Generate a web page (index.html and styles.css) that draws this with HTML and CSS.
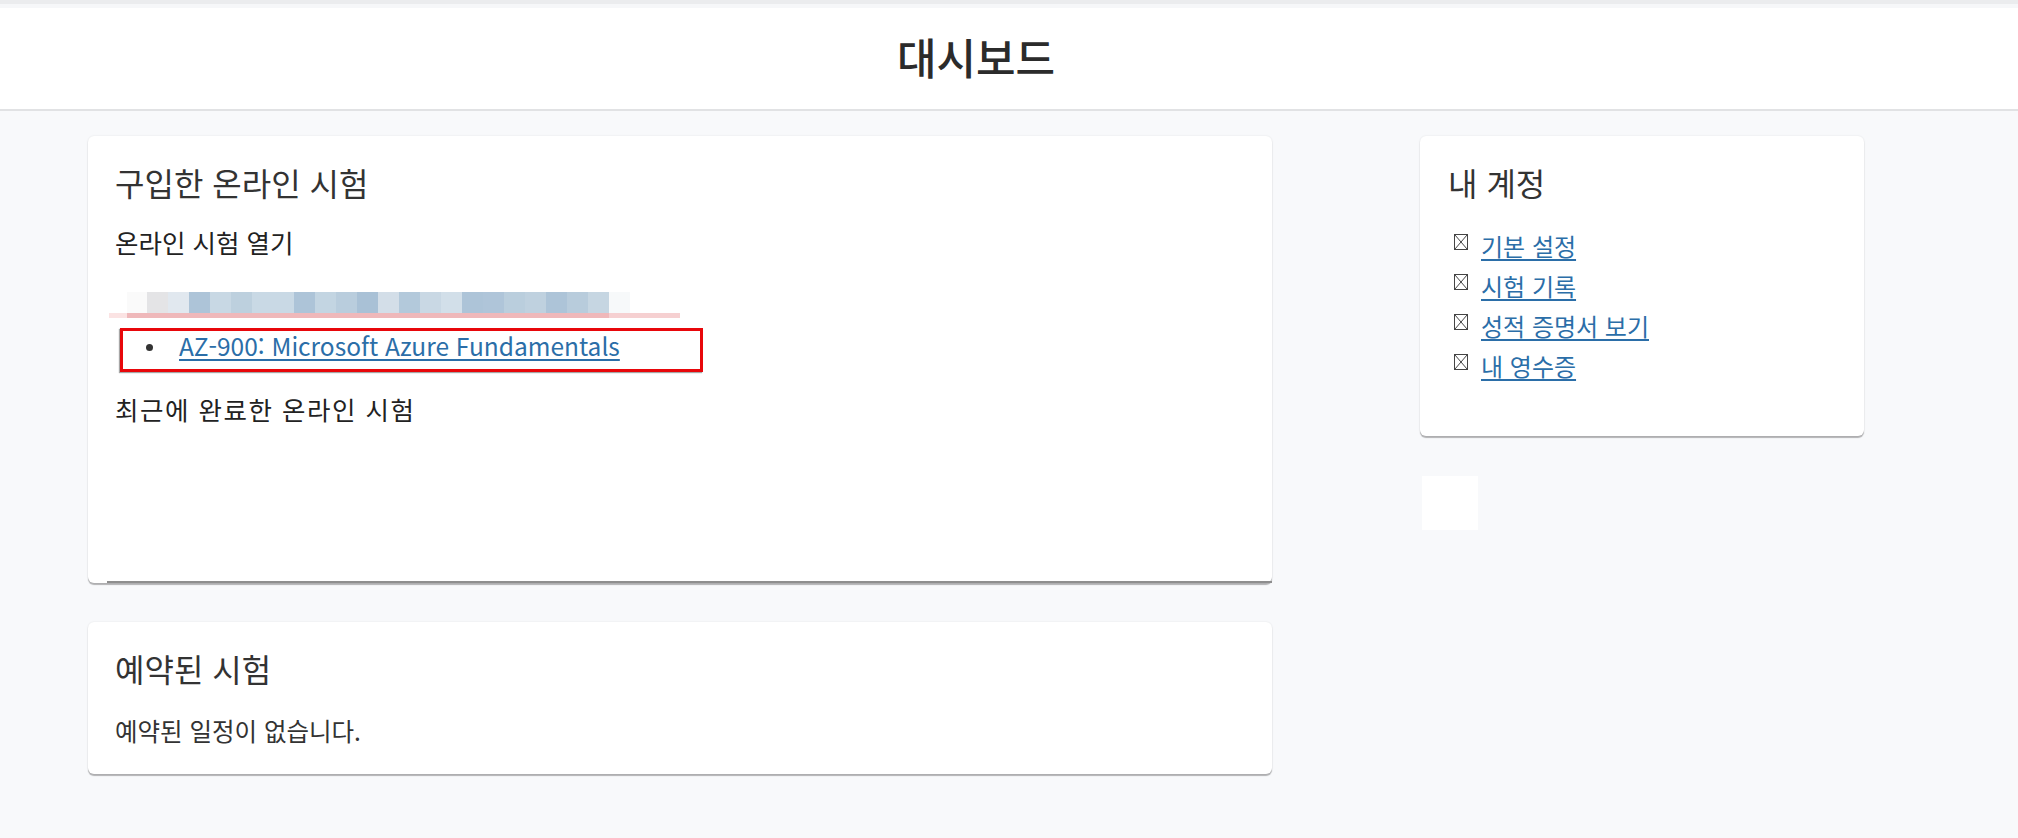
FILE: index.html
```html
<!DOCTYPE html>
<html lang="ko">
<head>
<meta charset="utf-8">
<title>대시보드</title>
<link rel="stylesheet" href="styles.css">
</head>
<body>
<div class="topbar"></div>
<header class="header">
  <div class="header-inner">
    <h1 class="page-title">대시보드</h1>
  </div>
</header>
<main class="main">
  <div class="col-left">
    <section class="card card-exams">
      <h2 class="card-title">구입한 온라인 시험</h2>
      <h3 class="sub-title">온라인 시험 열기</h3>
      <div class="blur-wrap">
        <div class="blur-text"></div>
        <div class="blur-line"></div>
      </div>
      <div class="highlight">
        <ul class="exam-list">
          <li><a href="#">AZ-900: Microsoft Azure Fundamentals</a></li>
        </ul>
      </div>
      <h3 class="sub-title recent-title">최근에 완료한 온라인 시험</h3>
      <div class="recent-area"></div>
    </section>
    <section class="card card-scheduled">
      <h2 class="card-title">예약된 시험</h2>
      <p class="card-text">예약된 일정이 없습니다.</p>
    </section>
  </div>
  <div class="col-right">
    <section class="card card-account">
      <h2 class="card-title">내 계정</h2>
      <ul class="account-list">
        <li><svg class="xbox" viewBox="0 0 14 16" width="14" height="16"><rect x="0.5" y="0.5" width="13" height="15" fill="none" stroke="#444" stroke-width="1"/><path d="M1 1 L13 15 M13 1 L1 15" stroke="#444" stroke-width="1" fill="none"/></svg><a href="#">기본 설정</a></li>
        <li><svg class="xbox" viewBox="0 0 14 16" width="14" height="16"><rect x="0.5" y="0.5" width="13" height="15" fill="none" stroke="#444" stroke-width="1"/><path d="M1 1 L13 15 M13 1 L1 15" stroke="#444" stroke-width="1" fill="none"/></svg><a href="#">시험 기록</a></li>
        <li><svg class="xbox" viewBox="0 0 14 16" width="14" height="16"><rect x="0.5" y="0.5" width="13" height="15" fill="none" stroke="#444" stroke-width="1"/><path d="M1 1 L13 15 M13 1 L1 15" stroke="#444" stroke-width="1" fill="none"/></svg><a href="#">성적 증명서 보기</a></li>
        <li><svg class="xbox" viewBox="0 0 14 16" width="14" height="16"><rect x="0.5" y="0.5" width="13" height="15" fill="none" stroke="#444" stroke-width="1"/><path d="M1 1 L13 15 M13 1 L1 15" stroke="#444" stroke-width="1" fill="none"/></svg><a href="#">내 영수증</a></li>
      </ul>
    </section>
    <div class="blank-box"></div>
  </div>
</main>
</body>
</html>
```
FILE: styles.css
```css
* { box-sizing: border-box; }
html, body { margin: 0; padding: 0; }
body {
  background: #f8f9fb;
  color: #333;
  font-family: "Noto Sans CJK KR", "Noto Sans", sans-serif;
  width: 2018px;
  height: 838px;
  overflow: hidden;
}
.topbar {
  height: 8px;
  background: linear-gradient(#ebecee 0, #ebecee 4px, #f6f7f9 4px, #f6f7f9 8px);
}
.header {
  background: #fff;
  height: 103px;
  border-bottom: 2px solid #e1e2e4;
}
.header-inner {
  margin-left: 88px;
  width: 1776px;
  height: 100%;
  display: flex;
  align-items: center;
  justify-content: center;
  padding-bottom: 6px;
}
.page-title {
  margin: 0;
  font-size: 43px;
  font-weight: 500;
  line-height: 50px;
  color: #2b2b2b;
}
.main {
  display: flex;
  gap: 148px;
  padding: 25px 0 0 88px;
}
.col-left {
  width: 1184px;
  display: flex;
  flex-direction: column;
  gap: 39px;
}
.col-right {
  width: 444px;
  display: flex;
  flex-direction: column;
}
.card {
  background: #fff;
  border-radius: 6px;
  box-shadow: 0 0 2px rgba(0,0,0,0.10), 0 2px 1px rgba(0,0,0,0.28);
  padding: 26px 27px 0;
}
.card-title {
  margin: 0;
  font-size: 32px;
  font-weight: 400;
  line-height: 40px;
  color: #333;
}
.sub-title {
  margin: 24px 0 0;
  font-size: 25.5px;
  font-weight: 400;
  line-height: 32px;
  color: #222;
}
.blur-wrap {
  margin-top: 34px;
}
.blur-text {
  margin-left: 12px;
  width: 503px;
  height: 21px;
  background: linear-gradient(90deg,
    #fafafa 0 20px, #e4e4e6 20px 41px, #e1e8ef 41px 62px, #adc4d8 62px 83px,
    #c8d8e4 83px 104px, #bdd0de 104px 125px, #c9d9e5 125px 167px, #adc4d8 167px 188px,
    #c3d5e2 188px 209px, #b9cddd 209px 230px, #a9c1d6 230px 251px, #d3dee8 251px 272px,
    #b3c9db 272px 293px, #c9d8e4 293px 314px, #d2dfe9 314px 335px, #adc4d8 335px 356px,
    #afc5d9 356px 377px, #bacedd 377px 398px, #bfd1df 398px 419px, #adc4d8 419px 440px,
    #b8ccdc 440px 461px, #c6d6e2 461px 482px, #f7f9fa 482px 503px);
}
.blur-line {
  margin-left: -6px;
  width: 571px;
  height: 5px;
  background: linear-gradient(90deg, #fbe3e3 0 18px, #efb8ba 18px 500px, #f6d0d1 500px 571px);
}
.highlight {
  margin: 10px 0 0 5px;
  width: 583px;
  height: 44px;
  border: 3px solid #e8070b;
  box-shadow: -1px 1px 1px rgba(0,0,0,0.35);
  display: flex;
  align-items: center;
  padding-bottom: 8px;
}
.exam-list {
  list-style: none;
  margin: 0;
  padding: 0 0 0 23px;
  font-size: 24.5px;
  line-height: 32px;
}
.exam-list li {
  display: flex;
  align-items: center;
}
.exam-list li::before {
  content: "";
  width: 7px;
  height: 7px;
  border-radius: 50%;
  background: #333;
  margin: 3px 26px 0 0;
}
.exam-list a, .account-list a {
  color: #2b6ea8;
  text-decoration: underline;
  text-underline-offset: 3px;
  text-decoration-thickness: 2px;
}
.recent-title { margin-top: 21px; letter-spacing: 1.5px; }
.recent-area {
  height: 158px;
  margin: 0 -27px 0 -8px;
  border-bottom: 2px solid #8e8e8e;
}
.card-scheduled { padding-bottom: 28px; }
.card-text {
  margin: 28px 0 0;
  font-size: 24.5px;
  line-height: 30px;
  color: #333;
}
.card-account {
  padding-left: 28px;
  padding-bottom: 51px;
}
.account-list {
  list-style: none;
  margin: 23px 0 0;
  padding: 0;
}
.account-list li {
  display: flex;
  align-items: center;
  height: 40px;
  font-size: 24px;
}
.xbox {
  flex: none;
  margin: -6px 13px 0 6px;
}
.blank-box {
  margin: 40px 0 0 2px;
  width: 56px;
  height: 54px;
  background: #fff;
}
```
